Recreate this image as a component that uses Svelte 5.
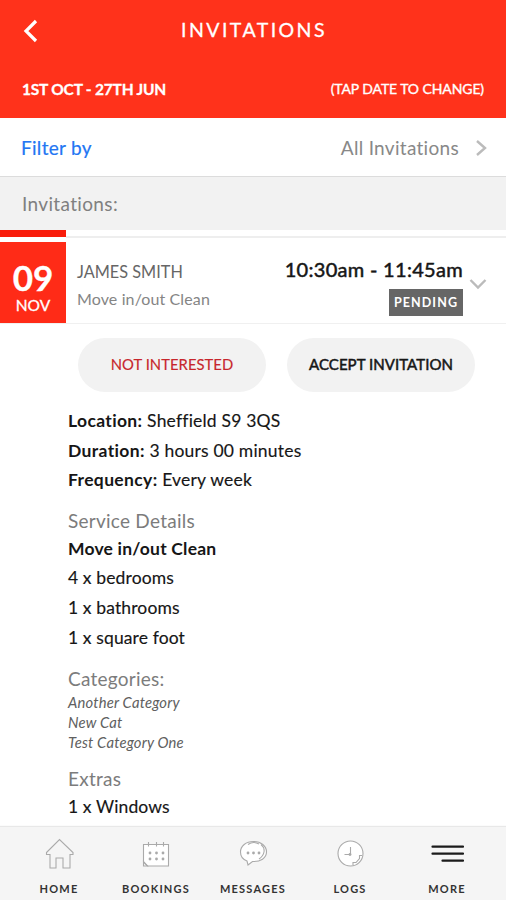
<script>
  const rows = [
    { label: 'Location:', value: 'Sheffield S9 3QS' },
    { label: 'Duration:', value: '3 hours 00 minutes' },
    { label: 'Frequency:', value: 'Every week' }
  ]
  const services = ['4 x bedrooms', '1 x bathrooms', '1 x square foot']
  const categories = ['Another Category', 'New Cat', 'Test Category One']
  const tabs = ['home', 'bookings', 'messages', 'logs', 'more']
</script>

<div class="App">
  <header class="Header">
    <div class="Header-bar">
      <svg class="Header-back" viewBox="0 0 16 24" aria-label="Back">
        <path d="M14 2 4 12l10 10" />
      </svg>
      <h1 class="Header-title">INVITATIONS</h1>
    </div>
    <div class="Header-dates">
      <span class="Header-range">1ST OCT - 27TH JUN</span>
      <span class="Header-hint">(TAP DATE TO CHANGE)</span>
    </div>
  </header>

  <div class="Filter">
    <span class="Filter-label">Filter by</span>
    <span class="Filter-value">All Invitations</span>
    <svg class="Filter-chevron" viewBox="0 0 12 18"><path d="m2 2 8 7-8 7" /></svg>
  </div>

  <h2 class="Section">Invitations:</h2>
  <div class="Strip"><div class="Strip-date"></div></div>

  <div class="Invite">
    <div class="Invite-date">
      <span class="Invite-day">09</span>
      <span class="Invite-month">NOV</span>
    </div>
    <div class="Invite-who">
      <span class="Invite-name">JAMES SMITH</span>
      <span class="Invite-service">Move in/out Clean</span>
    </div>
    <div class="Invite-when">
      <span class="Invite-time">10:30am - 11:45am</span>
      <span class="Invite-status">PENDING</span>
    </div>
    <svg class="Invite-chevron" viewBox="0 0 18 12"><path d="m1.500 2 7.500 7.500L16.500 2" /></svg>
  </div>

  <main class="Detail">
    <div class="Actions">
      <button class="Actions-button Actions-button--no">NOT INTERESTED</button>
      <button class="Actions-button">ACCEPT INVITATION</button>
    </div>
    {#each rows as row}
      <p class="Line Line--summary"><b>{row.label}</b> {row.value}</p>
    {/each}

    <h3 class="Heading">Service Details</h3>
    <p class="Line"><b>Move in/out Clean</b></p>
    {#each services as service}
      <p class="Line">{service}</p>
    {/each}

    <h3 class="Heading Heading--spaced">Categories:</h3>
    {#each categories as category}
      <p class="Category">{category}</p>
    {/each}

    <h3 class="Heading">Extras</h3>
    <p class="Line">1 x Windows</p>
  </main>

  <nav class="Tabs">
    {#each tabs as tab}
      <div class="Tab">
        <svg class="Tab-icon" class:Tab-icon--more={tab === 'more'} viewBox="0 0 36 34">
          {#if tab === 'home'}
            <path d="M5.500 17.500 18.500 4.500l13.500 13v2h-3v13.500h-7v-10h-7v10H9v-13.500H5.500z" />
          {:else if tab === 'bookings'}
            <path class="fill" d="M5.500 9.500h25v21.500h-21l-4-4z" />
            <path d="M5.500 26.500 9.500 31h-4zM10.500 7v4.500M18.500 7v4.500M25.500 7v4.500" />
            <path class="dots" d="M12 18h.01M18.500 18h.01M25 18h.01M12 24h.01M18.500 24h.01M25 24h.01" />
          {:else if tab === 'messages'}
            <path class="fill" d="M18.500 6.500C11 6.500 5.500 11 5.500 17c0 4 2.500 7.500 6.500 9l1 4 4.500-3.500c8 .5 14-3.500 14-9.500S26 6.500 18.500 6.500z" />
            <path d="M26 9.500c2.500 2 3.500 4.500 3 7.500-.5 3-2 5-5 7M13 9.500c3.500-2.500 7.500-2.500 11-.5" />
            <path class="dots" d="M13 18h.01M18.500 18h.01M24 18h.01" />
          {:else if tab === 'logs'}
            <circle class="fill" cx="18.500" cy="18.500" r="12.500" />
            <path d="M18.500 12v7.500h-6M21 30v-2.500h3l3.500-4v-3h2.500" />
            <path class="dots" d="M18 19.500h.01" />
          {:else}
            <path d="M3.500 11.700h30.500M3.500 18.700h30.500M13.500 25.700h20.500" />
          {/if}
        </svg>
        <span class="Tab-label">{tab.toUpperCase()}</span>
      </div>
    {/each}
  </nav>
</div>

<style>
  :global(body) {
    margin: 0;
    background: #fff;
  }
  .App {
    display: flex;
    flex-direction: column;
    width: 506px;
    height: 900px;
    overflow: hidden;
    font-family: Lato, 'Liberation Sans', sans-serif;
    font-variant-ligatures: none;
    color: #161616;
    background: #fff;
  }
  h1, h2, h3, p {
    margin: 0;
    font-weight: 400;
  }
  svg {
    fill: none;
    flex: none;
  }

  .Header {
    height: 117.5px;
    flex: none;
    background: #ff321b;
    color: #fff;
  }
  .Header-bar {
    display: grid;
    grid-template-columns: 60px 1fr 60px;
    align-items: center;
    height: 61px;
  }
  .Header-back {
    width: 16px;
    height: 24px;
    margin-left: 22px;
    stroke: #fff;
    stroke-width: 3.2;
  }
  .Header-title {
    padding: 0 0 2px 2px;
    font-size: 19.5px;
    letter-spacing: 2.45px;
    text-align: center;
    -webkit-text-stroke: 0.3px;
  }
  .Header-dates {
    display: flex;
    justify-content: space-between;
    align-items: center;
    height: 56px;
    padding: 0 22px;
  }
  .Header-range {
    font-size: 15.5px;
    font-weight: 700;
    letter-spacing: -0.2px;
    -webkit-text-stroke: 0.3px;
  }
  .Header-hint {
    padding-bottom: 2px;
    font-size: 14px;
    letter-spacing: -0.1px;
    -webkit-text-stroke: 0.35px;
  }

  .Filter {
    display: flex;
    align-items: center;
    height: 59px;
    flex: none;
    padding: 2px 19px 0 21px;
    box-sizing: border-box;
    border-bottom: 1px solid #dcdcdc;
    font-size: 19px;
    letter-spacing: 0.3px;
  }
  .Filter-label {
    flex: 1;
    color: #2376f3;
    -webkit-text-stroke: 0.2px;
  }
  .Filter-value {
    color: #888;
  }
  .Filter-chevron {
    width: 12px;
    height: 18px;
    margin-left: 16px;
    stroke: #bbb;
    stroke-width: 2.4;
  }

  .Section {
    height: 53.5px;
    flex: none;
    padding-left: 22px;
    background: #f2f2f2;
    font-size: 19px;
    letter-spacing: 0.35px;
    line-height: 54px;
    color: #808080;
  }
  .Strip {
    height: 12px;
    flex: none;
    background: linear-gradient(#fff 6px, #eee 6px, #eee 8px, #fff 8px);
  }
  .Strip-date {
    width: 66px;
    height: 7px;
    background: #f91d0b;
    border-bottom: 5px solid #fff;
  }

  .Invite {
    display: flex;
    height: 82px;
    flex: none;
    box-sizing: border-box;
    border-bottom: 1px solid #f0f0f0;
  }
  .Invite-date {
    display: flex;
    flex-direction: column;
    align-items: center;
    width: 66px;
    height: 81px;
    background: #ff2b17;
    color: #fff;
  }
  .Invite-day {
    margin-top: 20px;
    font-size: 35px;
    font-weight: 700;
    line-height: 30px;
    -webkit-text-stroke: 0.3px;
  }
  .Invite-month {
    margin-top: 3px;
    font-size: 15.5px;
    line-height: 20px;
    -webkit-text-stroke: 0.3px;
  }
  .Invite-who {
    display: flex;
    flex-direction: column;
    flex: 1;
    padding: 16px 0 0 11px;
    color: #666;
  }
  .Invite-name {
    font-size: 16.3px;
    line-height: 27px;
  }
  .Invite-service {
    font-size: 16px;
    line-height: 28px;
    letter-spacing: 0.12px;
    color: #858585;
  }
  .Invite-when {
    display: flex;
    flex-direction: column;
    align-items: flex-end;
    padding-top: 14px;
  }
  .Invite-time {
    font-size: 20px;
    line-height: 26px;
    letter-spacing: 0.3px;
    -webkit-text-stroke: 0.5px;
  }
  .Invite-status {
    width: 74px;
    height: 27px;
    margin-top: 7px;
    background: #666;
    color: #fff;
    font-size: 12.5px;
    font-weight: 700;
    line-height: 27px;
    letter-spacing: 1.1px;
    text-align: center;
  }
  .Invite-chevron {
    width: 18px;
    height: 12px;
    margin: 36px 19px 0 6px;
    stroke: #bbb;
    stroke-width: 2.4;
  }

  .Detail {
    flex: 1;
    min-height: 0;
    padding: 14px 31px 0 68px;
  }
  .Actions {
    display: flex;
    gap: 21px;
    padding-left: 10px;
    margin-bottom: 14px;
  }
  .Actions-button {
    flex: 1;
    height: 54px;
    padding: 0 0 2px;
    border: 0;
    border-radius: 27px;
    background: #f2f2f2;
    color: #161616;
    font: 400 15px Lato, sans-serif;
    letter-spacing: 0.05px;
    white-space: nowrap;
    -webkit-text-stroke: 0.5px;
  }
  .Actions-button--no {
    color: #c7262c;
    font-size: 14.8px;
    -webkit-text-stroke: 0.15px;
  }
  .Line {
    font-size: 17.5px;
    letter-spacing: 0.12px;
    line-height: 29.7px;
    -webkit-text-stroke: 0.15px;
  }
  .Line b {
    font-weight: 700;
    letter-spacing: 0.2px;
    -webkit-text-stroke: 0;
  }
  .Line--summary {
    letter-spacing: 0.2px;
  }
  .Line--summary b {
    letter-spacing: 0.35px;
  }
  .Heading {
    height: 26.5px;
    margin-top: 12px;
    font-size: 19px;
    letter-spacing: 0.25px;
    line-height: 27px;
    color: #7c7c7c;
  }
  .Heading--spaced {
    margin-top: 12.8px;
  }
  .Heading:last-of-type {
    height: 27.5px;
  }
  .Category {
    font-size: 14.8px;
    font-style: italic;
    letter-spacing: 0.18px;
    line-height: 20.3px;
    color: #606060;
  }

  .Tabs {
    display: flex;
    height: 73px;
    flex: none;
    padding: 0 10.5px;
    background: #f5f5f5;
    box-shadow: 0 -1px 1px #e8e8e8;
  }
  .Tab {
    display: flex;
    flex: 1;
    flex-direction: column;
    align-items: center;
    padding-top: 8px;
  }
  .Tab-icon {
    width: 36px;
    height: 34px;
    stroke: #aaa;
    stroke-width: 1.1;
  }
  .Tab-icon .fill {
    fill: #fff;
  }
  .Tab-icon .dots {
    stroke-width: 2.8;
    stroke-linecap: round;
  }
  .Tab-icon--more {
    stroke: #1b1b1b;
    stroke-width: 2.2;
    stroke-linecap: round;
  }
  .Tab-label {
    margin-top: 12px;
    font-size: 11px;
    font-weight: 700;
    line-height: 15px;
    letter-spacing: 1.2px;
    color: #333;
  }
</style>
